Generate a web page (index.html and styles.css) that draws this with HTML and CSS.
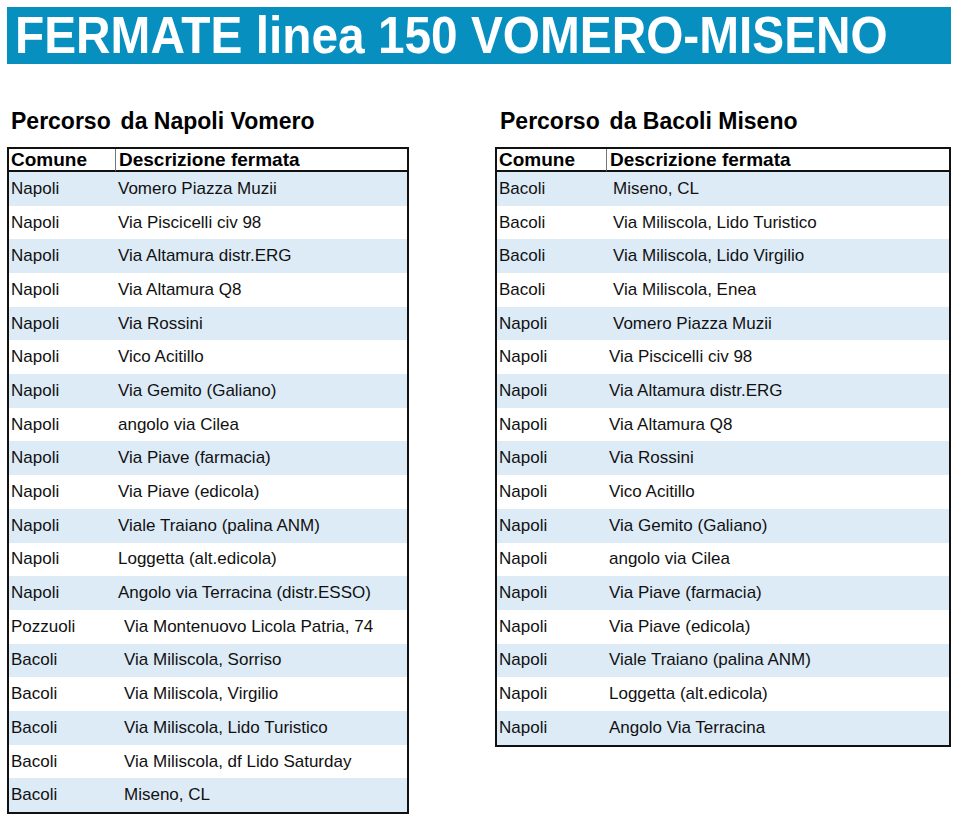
FILE: index.html
```html
<!DOCTYPE html>
<html lang="it">
<head>
<meta charset="utf-8">
<title>FERMATE linea 150 VOMERO-MISENO</title>
<link rel="stylesheet" href="styles.css">
</head>
<body>
<header class="title-bar"><h1 class="title">FERMATE linea 150 VOMERO-MISENO</h1></header>
<main class="routes">
  <section class="route route-left">
    <h2 class="route-title"><span class="rt-first">Percorso</span> da Napoli Vomero</h2>
    <table class="stops">
      <colgroup><col class="c1-left"><col></colgroup>
      <thead><tr><th class="h-comune">Comune</th><th class="h-desc">Descrizione fermata</th></tr></thead>
      <tbody>
        <tr><td>Napoli</td><td class="d">Vomero Piazza Muzii</td></tr>
        <tr><td>Napoli</td><td class="d">Via Piscicelli civ 98</td></tr>
        <tr><td>Napoli</td><td class="d">Via Altamura distr.ERG</td></tr>
        <tr><td>Napoli</td><td class="d">Via Altamura Q8</td></tr>
        <tr><td>Napoli</td><td class="d">Via Rossini</td></tr>
        <tr><td>Napoli</td><td class="d">Vico Acitillo</td></tr>
        <tr><td>Napoli</td><td class="d">Via Gemito (Galiano)</td></tr>
        <tr><td>Napoli</td><td class="d">angolo via Cilea</td></tr>
        <tr><td>Napoli</td><td class="d">Via Piave (farmacia)</td></tr>
        <tr><td>Napoli</td><td class="d">Via Piave (edicola)</td></tr>
        <tr><td>Napoli</td><td class="d">Viale Traiano (palina ANM)</td></tr>
        <tr><td>Napoli</td><td class="d">Loggetta (alt.edicola)</td></tr>
        <tr><td>Napoli</td><td class="d">Angolo via Terracina (distr.ESSO)</td></tr>
        <tr><td>Pozzuoli</td><td class="d ind">Via Montenuovo Licola Patria, 74</td></tr>
        <tr><td>Bacoli</td><td class="d ind">Via Miliscola, Sorriso</td></tr>
        <tr><td>Bacoli</td><td class="d ind">Via Miliscola, Virgilio</td></tr>
        <tr><td>Bacoli</td><td class="d ind">Via Miliscola, Lido Turistico</td></tr>
        <tr><td>Bacoli</td><td class="d ind">Via Miliscola, df Lido Saturday</td></tr>
        <tr><td>Bacoli</td><td class="d ind">Miseno, CL</td></tr>
      </tbody>
    </table>
  </section>
  <section class="route route-right">
    <h2 class="route-title"><span class="rt-first">Percorso</span> da Bacoli Miseno</h2>
    <table class="stops">
      <colgroup><col class="c1-right"><col></colgroup>
      <thead><tr><th class="h-comune">Comune</th><th class="h-desc">Descrizione fermata</th></tr></thead>
      <tbody>
        <tr><td>Bacoli</td><td class="d ind2">Miseno, CL</td></tr>
        <tr><td>Bacoli</td><td class="d ind2">Via Miliscola, Lido Turistico</td></tr>
        <tr><td>Bacoli</td><td class="d ind2">Via Miliscola, Lido Virgilio</td></tr>
        <tr><td>Bacoli</td><td class="d ind2">Via Miliscola, Enea</td></tr>
        <tr><td>Napoli</td><td class="d ind2">Vomero Piazza Muzii</td></tr>
        <tr><td>Napoli</td><td class="d">Via Piscicelli civ 98</td></tr>
        <tr><td>Napoli</td><td class="d">Via Altamura distr.ERG</td></tr>
        <tr><td>Napoli</td><td class="d">Via Altamura Q8</td></tr>
        <tr><td>Napoli</td><td class="d">Via Rossini</td></tr>
        <tr><td>Napoli</td><td class="d">Vico Acitillo</td></tr>
        <tr><td>Napoli</td><td class="d">Via Gemito (Galiano)</td></tr>
        <tr><td>Napoli</td><td class="d">angolo via Cilea</td></tr>
        <tr><td>Napoli</td><td class="d">Via Piave (farmacia)</td></tr>
        <tr><td>Napoli</td><td class="d">Via Piave (edicola)</td></tr>
        <tr><td>Napoli</td><td class="d">Viale Traiano (palina ANM)</td></tr>
        <tr><td>Napoli</td><td class="d">Loggetta (alt.edicola)</td></tr>
        <tr><td>Napoli</td><td class="d">Angolo Via Terracina</td></tr>
      </tbody>
    </table>
  </section>
</main>
</body>
</html>
```
FILE: styles.css
```css
html, body {
  margin: 0;
  padding: 0;
  background: #ffffff;
}
body {
  font-family: "Liberation Sans", Arial, sans-serif;
  color: #111111;
}
.title-bar {
  margin: 7px 9px 0 7px;
  height: 57px;
  background: #078fc0;
  padding-left: 8px;
  overflow: hidden;
  white-space: nowrap;
}
.title {
  margin: 0;
  display: inline-block;
  font-size: 51.5px;
  line-height: 57px;
  font-weight: 700;
  color: #ffffff;
  transform: scaleX(0.928);
  transform-origin: left center;
}
.routes {
  display: flex;
  gap: 86px;
  margin: 44.4px 9px 0 7px;
  align-items: flex-start;
}
.route-left { width: 402px; flex: none; }
.route-right { width: 456px; flex: none; }
.route-title {
  margin: 0 0 12.6px 0;
  padding-left: 4px;
  font-size: 23px;
  line-height: 26px;
  font-weight: 700;
  color: #000;
  white-space: nowrap;
}
.route-right .route-title { padding-left: 5px; }
.rt-first { margin-right: 3.5px; }
.stops {
  width: 100%;
  table-layout: fixed;
  border-collapse: separate;
  border-spacing: 0;
  border: 2px solid #111;
  font-size: 17px;
}
.c1-left { width: 107px; }
.c1-right { width: 110px; }
.stops th {
  height: 20px;
  padding: 1px 0 0 2px;
  font-size: 19px;
  line-height: 20px;
  font-weight: 700;
  text-align: left;
  color: #000;
  border-bottom: 2px solid #111;
  white-space: nowrap;
  overflow: hidden;
}
.stops th.h-comune {
  border-right: 1px solid #777;
}
.stops th.h-desc { padding-left: 3px; }
.stops td {
  height: 33.7px;
  padding: 0 0 0 2px;
  line-height: 20px;
  vertical-align: middle;
  white-space: nowrap;
  overflow: hidden;
}
.stops td.d { padding-left: 2px; }
.stops td.ind { padding-left: 8px; }
.stops td.ind2 { padding-left: 6px; }
.stops tbody tr:nth-child(odd) td {
  background: #ddebf7;
}
```
